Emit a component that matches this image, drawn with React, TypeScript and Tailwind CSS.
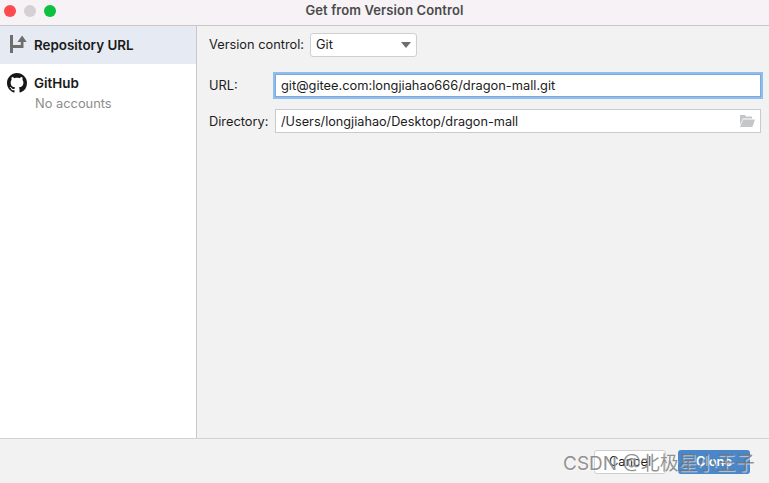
import React from "react";

const font = { fontFamily: '"Inter", "Noto Sans CJK SC", sans-serif' };

function RepoIcon() {
  return (
    <svg width="18" height="18" viewBox="0 0 18 18" className="mb-[2px] shrink-0">
      <path d="M1 0h3v18H1z" fill="#6e6e6e" />
      <path d="M4 10h7.8V7h2.7v6H4z" fill="#6e6e6e" />
      <path d="M8.5 7 13.1 0.5 17.7 7z" fill="#6e6e6e" />
    </svg>
  );
}

function GithubIcon() {
  return (
    <svg width="20" height="20" viewBox="0 0 16 16" fill="#17171a" className="shrink-0">
      <path d="M8 0C3.58 0 0 3.58 0 8c0 3.54 2.29 6.53 5.47 7.59.4.07.55-.17.55-.38 0-.19-.01-.82-.01-1.49-2.01.37-2.53-.49-2.69-.94-.09-.23-.48-.94-.82-1.13-.28-.15-.68-.52-.01-.53.63-.01 1.08.58 1.23.82.72 1.21 1.87.87 2.33.66.07-.52.28-.87.51-1.07-1.78-.2-3.64-.89-3.64-3.95 0-.87.31-1.59.82-2.15-.08-.2-.36-1.02.08-2.12 0 0 .67-.21 2.2.82.64-.18 1.32-.27 2-.27s1.36.09 2 .27c1.53-1.04 2.2-.82 2.2-.82.44 1.1.16 1.92.08 2.12.51.56.82 1.27.82 2.15 0 3.07-1.87 3.75-3.65 3.95.29.25.54.73.54 1.48 0 1.07-.01 1.93-.01 2.2 0 .21.15.46.55.38A8.01 8.01 0 0 0 16 8c0-4.42-3.58-8-8-8z" />
    </svg>
  );
}

function FolderIcon() {
  return (
    <svg width="15" height="12" viewBox="0 0 15 12" className="shrink-0">
      <path d="M0 0h5l1 1.5h6V3.4H3L0 10z" fill="#c3c7c9" />
      <path d="M3.2 4.6H15l-2.6 7.4H0z" fill="#c3c7c9" />
    </svg>
  );
}

export default function App() {
  return (
    <div className="relative flex h-[483px] w-[769px] flex-col overflow-hidden bg-[#f2f2f2] text-[#1c1c1c]" style={font}>
      <header className="relative flex h-[26px] shrink-0 justify-center border-b border-[#c8c8c8] bg-[#f6f2f6]">
        <div className="absolute left-1 top-[5px] flex gap-2">
          <span className="h-3 w-3 rounded-full bg-[#fc4a4e]" />
          <span className="h-3 w-3 rounded-full bg-[#d4d0d4]" />
          <span className="h-3 w-3 rounded-full bg-[#0cc13f]" />
        </div>
        <span className="pt-[2px] text-[13px] leading-[16px] font-semibold tracking-[0.1px] text-[#4a4a4a]">Get from Version Control</span>
      </header>

      <div className="flex min-h-0 flex-1">
        <aside className="w-[197px] shrink-0 border-r border-[#c8c8c8] bg-white">
          <div className="flex h-[38px] items-center gap-[7px] bg-[#e6ebf3] pl-[9px]">
            <RepoIcon />
            <span className="pt-[1px] text-[13.4px] font-semibold text-[#1a1a1a]">Repository URL</span>
          </div>
          <div className="flex items-start gap-[7px] pl-[7px] pt-[9px]">
            <GithubIcon />
            <div className="flex flex-col">
              <span className="text-[13.4px] leading-[20px] font-semibold text-[#1a1a1a]">GitHub</span>
              <span className="pl-[1px] pt-[1px] text-[12.85px] leading-[20px] text-[#8c8c8c]">No accounts</span>
            </div>
          </div>
        </aside>

        <main className="min-w-0 flex-1 pl-3 pr-2 pt-[7px] text-[12.8px]">
          <div className="flex h-[24px] items-center">
            <span className="w-[101px] shrink-0">Version control:</span>
            <div className="flex h-[24px] w-[107px] items-center justify-between rounded-[3px] border border-[#cfcfcf] bg-white pl-[5px] pr-[5px]">
              <span>Git</span>
              <svg width="10" height="6" viewBox="0 0 10 6"><path d="M0 0h10L5 6z" fill="#6e6e6e" /></svg>
            </div>
          </div>
          <div className="mt-[15px] -mr-[2px] flex h-[27px] items-center">
            <span className="w-[64px] shrink-0">URL:</span>
            <div className="flex h-[27px] flex-1 items-center border-2 border-[#8fbdee] bg-white pl-[6px] text-[12.83px] shadow-[inset_0_0_0_1px_#7fa8da]">
              <span>git@gitee.com:longjiahao666/dragon-mall.git</span>
            </div>
          </div>
          <div className="mt-[10px] flex h-[24px] items-center">
            <span className="w-[66px] shrink-0 pt-[1px]">Directory:</span>
            <div className="flex h-[24px] flex-1 items-center justify-between border border-[#cacaca] bg-white pl-[5px] pr-[5px]">
              <span className="pt-[1px] text-[12.7px]">/Users/longjiahao/Desktop/dragon-mall</span>
              <FolderIcon />
            </div>
          </div>
        </main>
      </div>

      <footer className="flex h-[45px] shrink-0 items-start justify-end gap-[12px] border-t border-[#d2d2d2] bg-[#f2f2f2] pr-[19px] pt-[11px] text-[12.8px]">
        <div className="flex h-[24px] w-[72px] items-center justify-center rounded-[3px] border border-[#cfcfcf] bg-white">Cancel</div>
        <div className="flex h-[24px] w-[72px] items-center justify-center rounded-[3px] bg-[#4a86c8] font-semibold text-white">Clone</div>
      </footer>

      <div className="pointer-events-none absolute left-[563px] top-[450px] whitespace-nowrap text-[19px] leading-[28px] text-[#707070]/75 [text-shadow:1px_1px_1px_rgba(255,255,255,0.6)]">
        CSDN @北极星小王子
      </div>
    </div>
  );
}
